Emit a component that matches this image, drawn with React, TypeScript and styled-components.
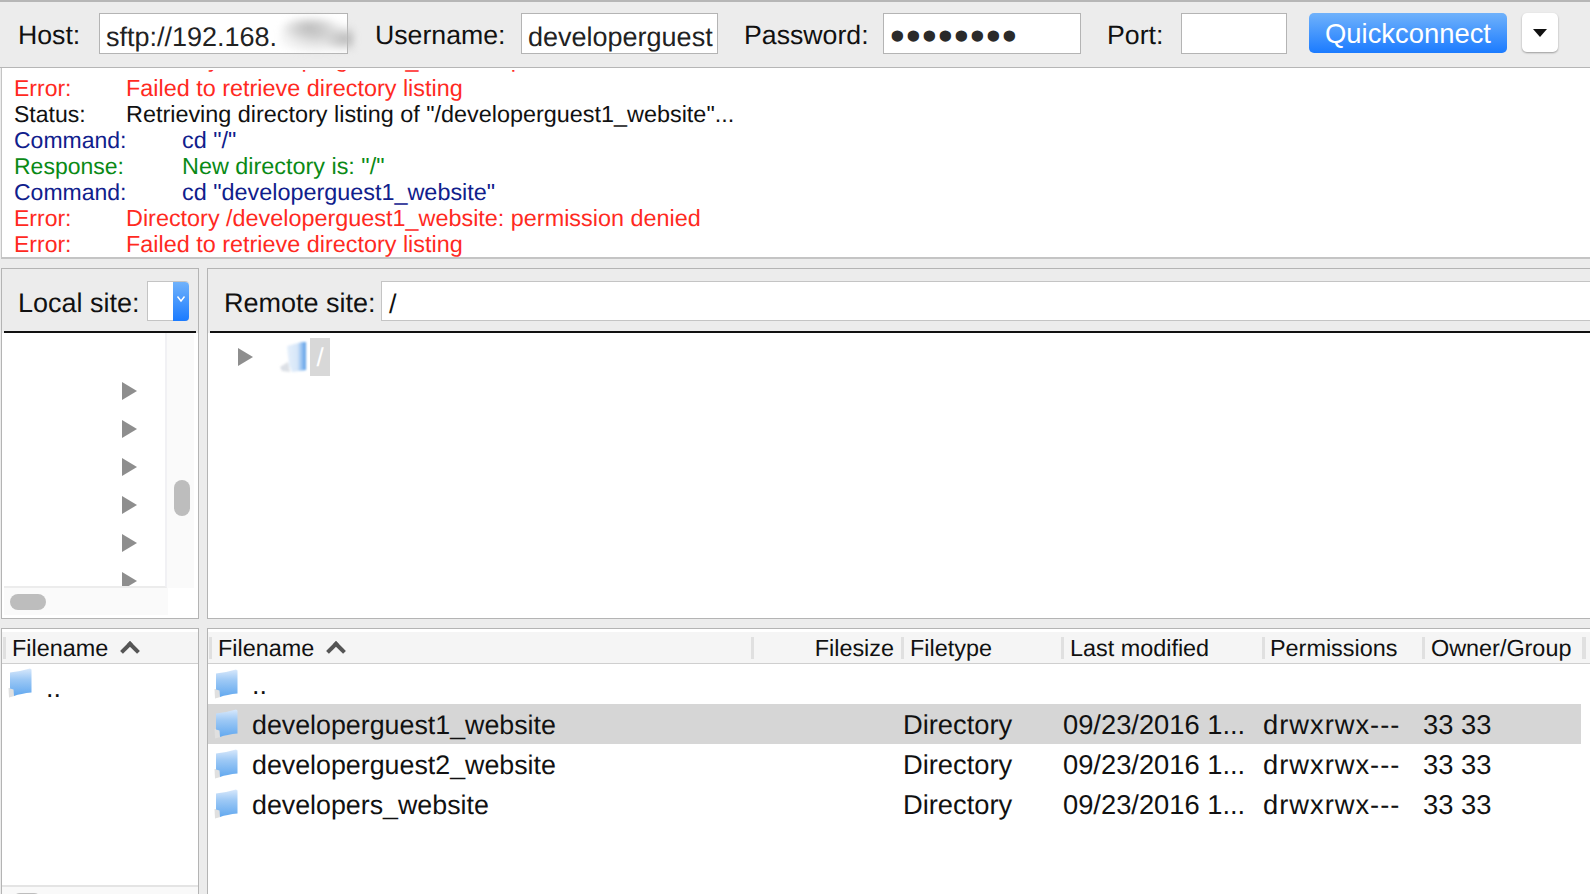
import { FC } from 'react';
import styled, { createGlobalStyle } from 'styled-components';

const GlobalStyle = createGlobalStyle`
  html, body {
    margin: 0;
    padding: 0;
    background: #ececec;
  }
  * {
    box-sizing: border-box;
  }
`;

const LOG_ROWS = [
  { kind: 'error', label: 'Error:', text: 'Directory /developerguest1_website: permission denied', wide: false },
  { kind: 'error', label: 'Error:', text: 'Failed to retrieve directory listing', wide: false },
  { kind: 'status', label: 'Status:', text: 'Retrieving directory listing of "/developerguest1_website"...', wide: false },
  { kind: 'command', label: 'Command:', text: 'cd "/"', wide: true },
  { kind: 'response', label: 'Response:', text: 'New directory is: "/"', wide: true },
  { kind: 'command', label: 'Command:', text: 'cd "developerguest1_website"', wide: true },
  { kind: 'error', label: 'Error:', text: 'Directory /developerguest1_website: permission denied', wide: false },
  { kind: 'error', label: 'Error:', text: 'Failed to retrieve directory listing', wide: false },
];

const LOG_COLORS: Record<string, string> = {
  error: '#ff2a1f',
  status: '#111',
  command: '#10208c',
  response: '#0a8a16',
};

const COLUMNS = [
  { title: 'Filename', indent: 6 },
  { title: 'Filesize', indent: 0, right: true },
  { title: 'Filetype', indent: 6 },
  { title: 'Last modified', indent: 6 },
  { title: 'Permissions', indent: 5 },
  { title: 'Owner/Group', indent: 6 },
];

const FILES = [
  { name: '..' },
  { name: 'developerguest1_website', type: 'Directory', modified: '09/23/2016 1...', perms: 'drwxrwx---', owner: '33 33', selected: true },
  { name: 'developerguest2_website', type: 'Directory', modified: '09/23/2016 1...', perms: 'drwxrwx---', owner: '33 33' },
  { name: 'developers_website', type: 'Directory', modified: '09/23/2016 1...', perms: 'drwxrwx---', owner: '33 33' },
];

const FolderIcon: FC = () => (
  <FolderSvg viewBox='0 0 24 30'>
    <defs>
      <linearGradient id='folderBlue' x1='0' y1='0' x2='0' y2='1'>
        <stop offset='0' stopColor='#d8e8fb' />
        <stop offset='0.4' stopColor='#9cc8f5' />
        <stop offset='1' stopColor='#62a8ef' />
      </linearGradient>
    </defs>
    <path d='M0.5 20 L6 20 L6.5 28 L1 29.5 Z' fill='#e0e0e0' />
    <path d='M2 4.5 Q12 3.5 22 0.5 L23.5 1.5 V24.5 Q13 25.5 6 28 L5.5 21.5 L2 20.5 Z' fill='url(#folderBlue)' />
  </FolderSvg>
);

const RootFolderIcon: FC = () => (
  <RootFolderSvg viewBox='0 0 28 32'>
    <defs>
      <linearGradient id='rootBlue' x1='0' y1='0' x2='1' y2='0'>
        <stop offset='0' stopColor='#e6f0fb' />
        <stop offset='0.55' stopColor='#d6e6f8' />
        <stop offset='0.8' stopColor='#8fbdf0' />
        <stop offset='1' stopColor='#5a9de6' />
      </linearGradient>
    </defs>
    <path d='M1 26 L9 21 L11 31 L3 30 Z' fill='#dce0e6' />
    <path d='M8 5 L23 1 L27 1 L27 29 L13 31 L10 24 Z' fill='url(#rootBlue)' />
  </RootFolderSvg>
);

export default function App() {
  return (
    <Screen>
      <GlobalStyle />
      <Toolbar>
        <ToolLabel $width={81}>Host:</ToolLabel>
        <TextBox $width={249}>
          sftp://192.168.
          <Smudge />
        </TextBox>
        <ToolLabel $width={173} $indent={27}>Username:</ToolLabel>
        <TextBox $width={197}>developerguest</TextBox>
        <ToolLabel $width={165} $indent={26}>Password:</ToolLabel>
        <TextBox $width={198}>
          <Dots>••••••••</Dots>
        </TextBox>
        <ToolLabel $width={100} $indent={26}>Port:</ToolLabel>
        <TextBox $width={106} />
        <ConnectButton>Quickconnect</ConnectButton>
        <MenuButton>
          <MenuArrow />
        </MenuButton>
      </Toolbar>

      <Log>
        <LogClip>
          {LOG_ROWS.map((row, i) => (
            <LogRow key={i} $color={LOG_COLORS[row.kind]}>
              <LogLabel $wide={row.wide}>{row.label}</LogLabel>
              <span>{row.text}</span>
            </LogRow>
          ))}
        </LogClip>
      </Log>

      <SiteRow>
        <SitePanel>
          <SiteHeader>
            <SiteLabel $width={129}>Local site:</SiteLabel>
            <SiteSelect>
              <SelectArrow>
                <svg width='10' height='8' viewBox='0 0 10 8'>
                  <path d='M1.5 1.5 L5 6 L8.5 1.5' fill='none' stroke='#fff' strokeWidth='1.4' />
                </svg>
              </SelectArrow>
            </SiteSelect>
          </SiteHeader>
          <LocalTree>
            <TreeColumn>
              {[0, 1, 2, 3, 4, 5].map((i) => (
                <TreeRow key={i}>
                  <Expander />
                </TreeRow>
              ))}
            </TreeColumn>
            <VerticalTrack>
              <VerticalThumb />
            </VerticalTrack>
          </LocalTree>
          <HorizontalTrack>
            <HorizontalThumb />
          </HorizontalTrack>
        </SitePanel>

        <SitePanel>
          <SiteHeader>
            <SiteLabel $width={157}>Remote site:</SiteLabel>
            <PathBox>/</PathBox>
          </SiteHeader>
          <RemoteTree>
            <Expander />
            <RootFolderIcon />
            <RootName>/</RootName>
          </RemoteTree>
        </SitePanel>
      </SiteRow>

      <ListRow>
        <ListPanel>
          <ListHeader>
            <HeaderCell $indent={6}>
              Filename
              <SortCaret />
            </HeaderCell>
          </ListHeader>
          <LocalList>
            <LocalFile>
              <FolderIcon />
              <FileName>..</FileName>
            </LocalFile>
          </LocalList>
          <ListScrollbar>
            <ListThumb />
          </ListScrollbar>
        </ListPanel>

        <ListPanel>
          <ListHeader>
            {COLUMNS.map((col, i) => (
              <HeaderCell key={col.title} $indent={col.indent} $right={col.right}>
                {col.title}
                {i === 0 && <SortCaret />}
              </HeaderCell>
            ))}
            <HeaderEnd />
          </ListHeader>
          {FILES.map((file) => (
            <FileRow key={file.name} $selected={file.selected}>
              <NameCell>
                <FolderIcon />
                <FileName>{file.name}</FileName>
              </NameCell>
              <span />
              <FileCell>{file.type}</FileCell>
              <FileCell>{file.modified}</FileCell>
              <FileCell $tracking={1}>{file.perms}</FileCell>
              <FileCell>{file.owner}</FileCell>
            </FileRow>
          ))}
        </ListPanel>
      </ListRow>
    </Screen>
  );
}

const Screen = styled.div`
  width: 1590px;
  height: 894px;
  overflow: hidden;
  background: #ececec;
  font-family: 'Liberation Sans', Arial, sans-serif;
  color: #111;
  text-rendering: geometricPrecision;
`;

const Toolbar = styled.div`
  display: flex;
  align-items: flex-start;
  height: 68px;
  padding: 11px 0 0 18px;
  border-top: 2px solid #b6b6b6;
  border-bottom: 1px solid #b6b6b6;
`;

const ToolLabel = styled.div<{ $width: number; $indent?: number }>`
  width: ${(p) => p.$width}px;
  padding-left: ${(p) => p.$indent ?? 0}px;
  font-size: 26.7px;
  line-height: 44px;
  white-space: nowrap;
`;

const TextBox = styled.div<{ $width: number }>`
  position: relative;
  width: ${(p) => p.$width}px;
  height: 41px;
  padding-left: 6px;
  background: #fff;
  border: 1px solid #b4b4b4;
  font-size: 27px;
  line-height: 46px;
  white-space: nowrap;
  color: #222;
`;

const Smudge = styled.div`
  position: absolute;
  left: 180px;
  top: 3px;
  width: 74px;
  height: 38px;
  background:
    radial-gradient(ellipse 40% 34% at 40% 28%, #bbb, transparent),
    radial-gradient(ellipse 30% 34% at 88% 58%, #b8b8b8, transparent),
    radial-gradient(ellipse 60% 50% at 50% 50%, #d2d2d2, transparent);
  filter: blur(3px);
`;

const Dots = styled.span`
  display: block;
  font-size: 42px;
  letter-spacing: 1.3px;
  line-height: 43px;
  color: #2a2a2a;
`;

const ConnectButton = styled.button`
  width: 198px;
  height: 40px;
  margin-left: 22px;
  padding: 2px 0 0;
  border: none;
  border-radius: 5px;
  background: linear-gradient(#70b2fb, #1b7bff);
  color: #fff;
  font-family: inherit;
  font-size: 27.4px;
`;

const MenuButton = styled.div`
  display: flex;
  align-items: center;
  justify-content: center;
  width: 36px;
  height: 39px;
  margin-left: 15px;
  background: #fff;
  border-radius: 5px;
  box-shadow: 0 1px 2px rgba(0, 0, 0, 0.35);
`;

const MenuArrow = styled.div`
  width: 0;
  height: 0;
  border-left: 7px solid transparent;
  border-right: 7px solid transparent;
  border-top: 8px solid #111;
`;

const Log = styled.div`
  height: 191px;
  margin-left: 1px;
  padding-top: 2px;
  background: #fff;
  border-left: 1px solid #c4c4c4;
  border-bottom: 2px solid #c4c4c4;
`;

const LogClip = styled.div`
  height: 187px;
  overflow: hidden;
`;

const LogRow = styled.div<{ $color: string }>`
  display: flex;
  height: 26px;
  padding-left: 12px;
  color: ${(p) => p.$color};
  font-size: 23.4px;
  line-height: 26px;
  white-space: nowrap;

  &:first-child {
    margin-top: -24px;
    margin-bottom: 3px;
  }
`;

const LogLabel = styled.span<{ $wide: boolean }>`
  flex: none;
  width: ${(p) => (p.$wide ? 168 : 112)}px;
  font-size: 23px;
`;

const SiteRow = styled.div`
  display: grid;
  grid-template-columns: 198px 1fr;
  column-gap: 8px;
  width: 1600px;
  height: 351px;
  margin: 9px 0 9px 1px;
`;

const SitePanel = styled.div`
  display: flex;
  flex-direction: column;
  overflow: hidden;
  background: #fff;
  border: 1.5px solid #b4b4b4;
  padding: 0 2px;
`;

const SiteHeader = styled.div`
  display: flex;
  align-items: flex-start;
  flex: none;
  position: relative;
  height: 64px;
  margin: 0 -2px;
  padding: 12px 0 0 16px;
  background: #ececec;

  &::after {
    content: '';
    position: absolute;
    left: 2px;
    right: 2px;
    bottom: 0;
    height: 2px;
    background: #111;
  }
`;

const SiteLabel = styled.div<{ $width: number }>`
  flex: none;
  width: ${(p) => p.$width}px;
  font-size: 27px;
  line-height: 44px;
  white-space: nowrap;
`;

const SiteSelect = styled.div`
  display: flex;
  justify-content: flex-end;
  width: 42px;
  height: 40px;
  background: #fff;
  border: 1px solid #c4c4c4;
  border-right: none;
  border-radius: 0 4px 4px 0;
`;

const SelectArrow = styled.div`
  display: flex;
  justify-content: center;
  width: 16px;
  height: 39px;
  padding-top: 13px;
  background: linear-gradient(#70b2fb, #1b7bff);
  border-radius: 0 4px 4px 0;
`;

const PathBox = styled.div`
  flex: 1;
  height: 40px;
  padding-left: 7px;
  background: #fff;
  border: 1px solid #c4c4c4;
  font-size: 27px;
  line-height: 44px;
`;

const LocalTree = styled.div`
  display: flex;
  flex: none;
  height: 255px;
`;

const TreeColumn = styled.div`
  flex: none;
  width: 163px;
  height: 255px;
  overflow: hidden;
  padding-top: 39px;
  border-right: 2px solid #f1f1f4;
  border-bottom: 2px solid #ececec;
`;

const TreeRow = styled.div`
  display: flex;
  align-items: center;
  height: 38px;
  padding-left: 118px;
`;

const Expander = styled.div`
  flex: none;
  width: 0;
  height: 0;
  border-top: 9px solid transparent;
  border-bottom: 9px solid transparent;
  border-left: 15px solid #8e8e8e;
`;

const VerticalTrack = styled.div`
  flex: none;
  width: 27px;
  padding: 147px 0 0 7px;
  background: #fafafa;
`;

const VerticalThumb = styled.div`
  width: 16px;
  height: 36px;
  border-radius: 8px;
  background: #bdbdbd;
`;

const HorizontalTrack = styled.div`
  flex: none;
  width: 164px;
  height: 27px;
  padding: 6px 0 0 6px;
  background: #fafafa;
`;

const HorizontalThumb = styled.div`
  width: 36px;
  height: 16px;
  border-radius: 8px;
  background: #bdbdbd;
`;

const RemoteTree = styled.div`
  display: flex;
  align-items: center;
  height: 38px;
  margin-top: 5px;
  padding-left: 28px;
`;

const RootName = styled.div`
  width: 20px;
  height: 38px;
  margin-left: 3px;
  background: #d8d8d8;
  color: #fff;
  font-size: 26px;
  line-height: 38px;
  text-align: center;
`;

const FolderSvg = styled.svg`
  flex: none;
  width: 24px;
  height: 30px;
  filter: blur(0.7px);
`;

const RootFolderSvg = styled.svg`
  flex: none;
  width: 28px;
  height: 32px;
  margin-left: 26px;
  filter: blur(0.8px);
`;

const ListRow = styled.div`
  display: grid;
  grid-template-columns: 198px 1fr;
  column-gap: 8px;
  width: 1600px;
  margin-left: 1px;
  height: 267px;
`;

const ListPanel = styled.div`
  display: flex;
  flex-direction: column;
  background: #fff;
  border-top: 1.5px solid #b4b4b4;
  border-left: 1.5px solid #b4b4b4;
  border-right: 1.5px solid #b4b4b4;
  padding-top: 3px;
`;

const ListHeader = styled.div`
  display: grid;
  grid-template-columns: 542px 150px 160px 201px 160px 160px 4px;
  align-items: center;
  flex: none;
  height: 32px;
  padding-left: 1px;
  background: #f5f5f5;
  border-bottom: 1.5px solid #cfcfcf;
  font-size: 23.4px;
`;

const HeaderCell = styled.div<{ $indent: number; $right?: boolean }>`
  display: flex;
  align-items: center;
  justify-content: ${(p) => (p.$right ? 'flex-end' : 'flex-start')};
  height: 22px;
  padding-top: 1px;
  padding-left: ${(p) => p.$indent}px;
  padding-right: ${(p) => (p.$right ? 7 : 0)}px;
  border-left: 3px solid #e0e0e0;
  white-space: nowrap;
`;

const HeaderEnd = styled.div`
  height: 22px;
  background: #e0e0e0;
`;

const SortCaret = styled.span`
  flex: none;
  width: 14px;
  height: 14px;
  margin: 6px 0 0 15px;
  border-top: 4px solid #555;
  border-left: 4px solid #555;
  transform: rotate(45deg);
`;

const LocalList = styled.div`
  flex: 1;
  padding: 4px 0 0 6px;
  background: #fff;
`;

const LocalFile = styled.div`
  display: flex;
  align-items: flex-start;
  gap: 14px;
  height: 40px;
`;

const FileName = styled.span`
  padding-top: 2px;
  font-size: 26.8px;
  line-height: 36px;
  white-space: nowrap;
`;

const ListScrollbar = styled.div`
  flex: none;
  height: 10px;
  padding: 6px 0 0 10px;
  overflow: hidden;
  background: #f9f9f9;
  border-top: 2px solid #e4e4e4;
`;

const ListThumb = styled.div`
  width: 30px;
  height: 16px;
  border-radius: 8px;
  background: #bdbdbd;
`;

const FileRow = styled.div<{ $selected?: boolean }>`
  display: grid;
  grid-template-columns: 694px 0 160px 200px 160px 158px;
  align-items: center;
  flex: none;
  width: 1373px;
  height: 40px;
  background: ${(p) => (p.$selected ? '#d6d6d6' : '#fff')};
  font-size: 27.3px;
`;

const NameCell = styled.div`
  display: flex;
  align-items: center;
  gap: 14px;
  padding-left: 6px;
`;

const FileCell = styled.div<{ $tracking?: number }>`
  padding: 2px 0 0 1px;
  letter-spacing: ${(p) => p.$tracking ?? 0}px;
  white-space: nowrap;
`;
